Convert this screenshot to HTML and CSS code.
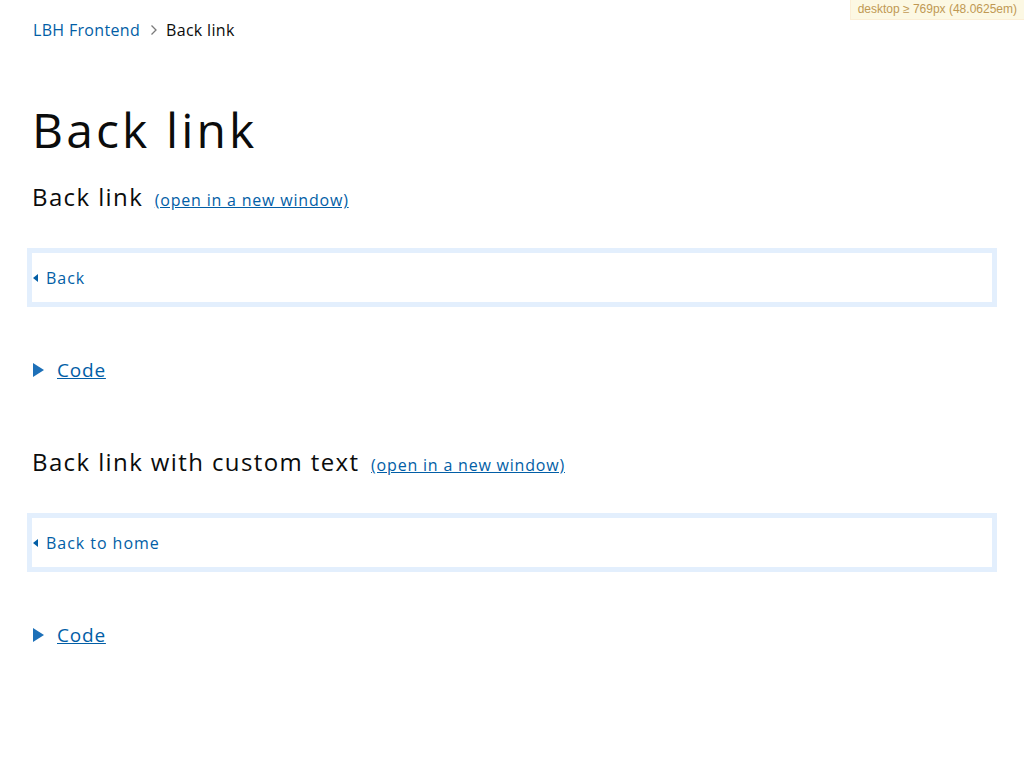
FILE: index.html
```html
<!DOCTYPE html>
<html lang="en">
<head>
<meta charset="utf-8">
<title>Back link</title>
<link rel="stylesheet" href="styles.css">
</head>
<body>
<div class="mq-badge">desktop ≥ 769px (48.0625em)</div>
<main class="container">
  <nav class="breadcrumbs">
    <a class="crumb-link" href="#">LBH Frontend</a>
    <svg class="crumb-sep" width="8" height="12" viewBox="0 0 8 12"><path d="M1.5 1.5 L6 6 L1.5 10.5" fill="none" stroke="#7a7a7a" stroke-width="1.3"/></svg>
    <span class="crumb-current">Back link</span>
  </nav>
  <h1 class="page-title">Back link</h1>

  <section class="example">
    <h2 class="example-title">Back link <a class="new-window" href="#">(open in a new window)</a></h2>
    <div class="frame">
      <a class="back-link" href="#"><span class="back-arrow"></span>Back</a>
    </div>
    <div class="code-toggle"><span class="code-arrow"></span><a class="code-link" href="#">Code</a></div>
  </section>

  <section class="example">
    <h2 class="example-title">Back link with custom text <a class="new-window" href="#">(open in a new window)</a></h2>
    <div class="frame">
      <a class="back-link" href="#"><span class="back-arrow"></span>Back to home</a>
    </div>
    <div class="code-toggle"><span class="code-arrow"></span><a class="code-link" href="#">Code</a></div>
  </section>
</main>
</body>
</html>
```
FILE: styles.css
```css
html, body {
  margin: 0;
  padding: 0;
  background: #fff;
}
body {
  font-family: "Open Sans", "DejaVu Sans", sans-serif;
  color: #0b0c0c;
  letter-spacing: 0.05em;
}
a {
  color: #025ea6;
}
.mq-badge {
  position: absolute;
  top: 0;
  right: 0;
  background: #fcf8e3;
  border-left: 1px solid #fbeed5;
  border-bottom: 1px solid #fbeed5;
  color: #c09853;
  font-family: "Liberation Sans", sans-serif;
  font-size: 12px;
  letter-spacing: 0;
  line-height: 19px;
  padding: 0 7px;
}
.container {
  width: 960px;
  margin: 0 auto;
}
.breadcrumbs {
  padding-top: 20px;
  line-height: 20px;
  height: 20px;
  font-size: 16px;
  letter-spacing: 0.02em;
  display: flex;
  align-items: center;
  padding-left: 1px;
}
.crumb-link {
  text-decoration: none;
}
.crumb-sep {
  margin: 0 8px 0 10px;
}
.crumb-current {
  color: #0b0c0c;
}
.page-title {
  margin: 62px 0 0;
  font-size: 48px;
  font-weight: 400;
  line-height: 56px;
  letter-spacing: 0.065em;
}
.example-title {
  margin: 24px 0 0;
  font-size: 24px;
  font-weight: 400;
  line-height: 30px;
  letter-spacing: 0.058em;
}
.example + .example .example-title {
  margin-top: 65px;
}
.new-window {
  font-size: 16px;
  letter-spacing: 0.05em;
  margin-left: 4px;
}
.frame {
  margin: 33px -5px 0;
  border: 5px solid #e3effd;
  height: 49px;
  display: flex;
  align-items: center;
}
.back-link {
  font-size: 16px;
  letter-spacing: 0.06em;
  text-decoration: none;
  display: flex;
  align-items: center;
  padding-left: 1px;
}
.back-arrow {
  width: 0;
  height: 0;
  border-top: 4px solid transparent;
  border-bottom: 4px solid transparent;
  border-right: 5px solid #025ea6;
  margin-right: 8px;
}
.code-toggle {
  margin-top: 51px;
  height: 24px;
  display: flex;
  align-items: center;
  padding-left: 1px;
}
.code-arrow {
  width: 0;
  height: 0;
  border-top: 7px solid transparent;
  border-bottom: 7px solid transparent;
  border-left: 11px solid #1d70b8;
  margin-right: 13px;
}
.code-link {
  font-size: 19px;
  line-height: 24px;
}
```
